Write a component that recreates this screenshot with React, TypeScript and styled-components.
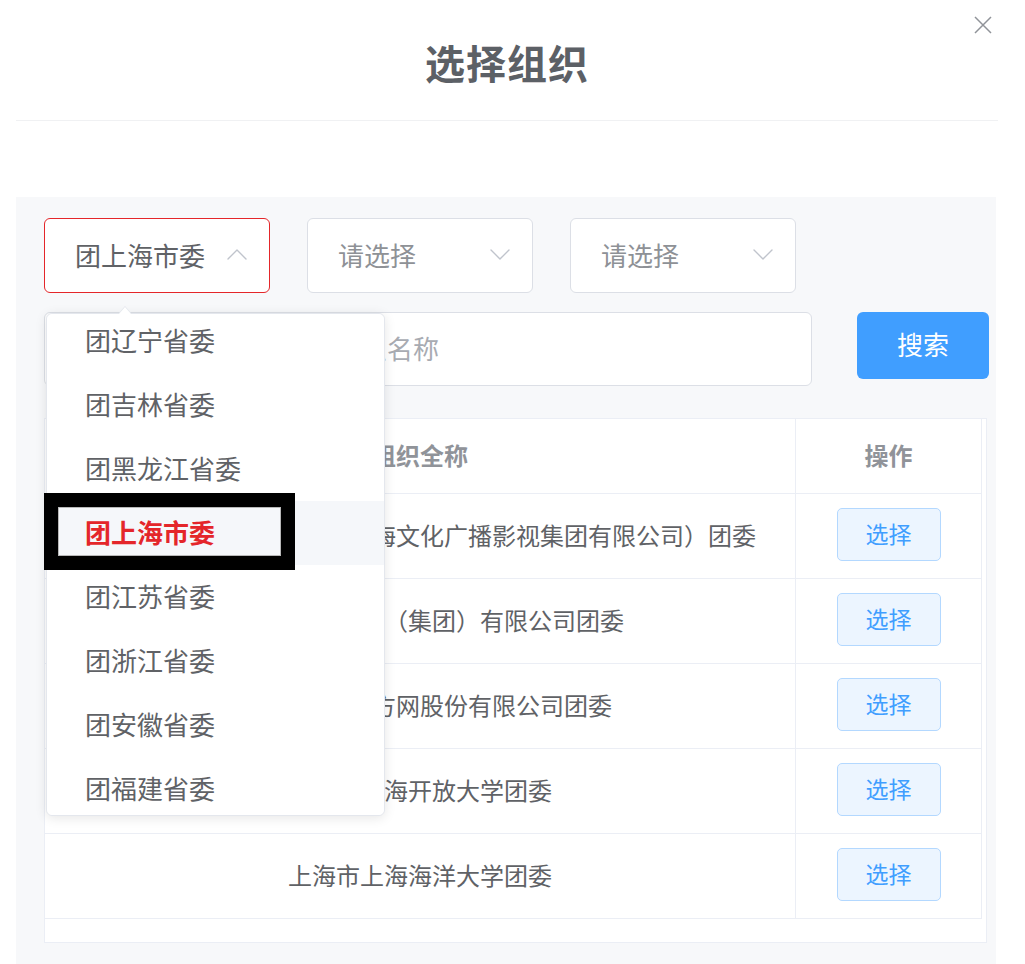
import styled, { createGlobalStyle } from 'styled-components'

const GlobalStyle = createGlobalStyle`
  html, body {
    margin: 0;
    padding: 0;
    background: #fff;
  }
  body {
    font-family: "Noto Sans CJK SC", "Noto Sans", sans-serif;
  }
  * {
    box-sizing: border-box;
  }
`

const provinces = [
  '团辽宁省委',
  '团吉林省委',
  '团黑龙江省委',
  '团上海市委',
  '团江苏省委',
  '团浙江省委',
  '团安徽省委',
  '团福建省委',
]

const orgs = [
  '上海市上海广播电视台（上海文化广播影视集团有限公司）团委',
  '上海市上海机场（集团）有限公司团委',
  '上海市上海东方网股份有限公司团委',
  '上海市上海开放大学团委',
  '上海市上海海洋大学团委',
]

function Chevron({ up }: { up?: boolean }) {
  return (
    <svg width="20" height="11" viewBox="0 0 20 11" fill="none">
      <polyline
        points={up ? '1,10 10,1 19,10' : '1,1 10,10 19,1'}
        stroke="#c0c4cc"
        strokeWidth="1.4"
        strokeLinecap="round"
        strokeLinejoin="round"
      />
    </svg>
  )
}

export default function App() {
  return (
    <>
      <GlobalStyle />
      <Dialog>
        <Header>
          <Title>选择组织</Title>
          <Close aria-label="close">
            <svg width="18" height="18" viewBox="0 0 18 18">
              <path d="M1 1L17 17M17 1L1 17" stroke="#909399" strokeWidth="1.5" />
            </svg>
          </Close>
        </Header>

        <Body>
          <Panel>
            <FilterRow>
              <SelectWrap>
                <Select $active>
                  <SelectValue>团上海市委</SelectValue>
                  <Chevron up />
                </Select>

                <Dropdown>
                  <Arrow />
                  <ScrollArea>
                    <OptionList>
                      {provinces.map((p) => (
                        <Option key={p} $active={p === '团上海市委'}>{p}</Option>
                      ))}
                    </OptionList>
                  </ScrollArea>
                  <Marker />
                </Dropdown>
              </SelectWrap>

              <Select>
                <SelectValue $placeholder>请选择</SelectValue>
                <Chevron />
              </Select>
              <Select>
                <SelectValue $placeholder>请选择</SelectValue>
                <Chevron />
              </Select>
            </FilterRow>

            <SearchRow>
              <SearchInput placeholder="请输入您需要查询的团组织名称" />
              <SearchButton>搜索</SearchButton>
            </SearchRow>

            <TableWrap>
              <Table>
                <Row $height={75}>
                  <HeadCell>组织全称</HeadCell>
                  <HeadCell>操作</HeadCell>
                </Row>
                {orgs.map((o) => (
                  <Row key={o} $height={85}>
                    <Cell>{o}</Cell>
                    <Cell>
                      <PickButton>选择</PickButton>
                    </Cell>
                  </Row>
                ))}
              </Table>
            </TableWrap>
          </Panel>
        </Body>
      </Dialog>
    </>
  )
}

const Dialog = styled.div`
  position: relative;
  width: 982px;
  margin-left: 16px;
`

const Header = styled.header`
  position: relative;
  height: 121px;
  padding-top: 4px;
  display: flex;
  align-items: center;
  justify-content: center;
  border-bottom: 1px solid #f0f1f3;
`

const Title = styled.h1`
  margin: 0;
  font-size: 40px;
  font-weight: 700;
  color: #5c6066;
  letter-spacing: 1px;
`

const Close = styled.button`
  position: absolute;
  top: 16px;
  right: 6px;
  width: 18px;
  height: 18px;
  padding: 0;
  border: none;
  background: none;
  display: flex;
`

const Body = styled.div`
  padding-top: 76px;
`

const Panel = styled.section`
  width: 980px;
  background: #f7f8fa;
  padding: 21px 7px 24px 28px;
`

const FilterRow = styled.div`
  display: flex;
  gap: 37px;
`

const SelectWrap = styled.div`
  position: relative;
`

const Select = styled.div<{ $active?: boolean }>`
  width: 226px;
  height: 75px;
  display: flex;
  align-items: center;
  justify-content: space-between;
  padding: 0 22px 3px 30px;
  background: #fff;
  border: ${({ $active }) => ($active ? '1.5px solid #e4262a' : '1px solid #dcdfe6')};
  border-radius: 6px;
`

const SelectValue = styled.span<{ $placeholder?: boolean }>`
  font-size: 26px;
  color: ${({ $placeholder }) => ($placeholder ? '#8e9196' : '#606266')};
`

const Dropdown = styled.div`
  position: absolute;
  top: 95px;
  left: 2px;
  z-index: 10;
  width: 339px;
  height: 503px;
  background: #fff;
  border: 1px solid #e4e7ed;
  border-radius: 6px;
  box-shadow: 0 2px 12px rgba(0, 0, 0, 0.1);
`

const Arrow = styled.div`
  position: absolute;
  top: -8px;
  left: 71px;
  width: 0;
  height: 0;
  border: 7px solid transparent;
  border-top: none;
  border-bottom: 8px solid #e4e7ed;

  &::after {
    content: '';
    position: absolute;
    top: 1px;
    left: -6px;
    border: 6px solid transparent;
    border-top: none;
    border-bottom: 7px solid #fff;
  }
`

const ScrollArea = styled.div`
  height: 100%;
  overflow: hidden;
  border-radius: 6px;
`

const OptionList = styled.ul`
  list-style: none;
  margin: -5px 0 0;
  padding: 0;
`

const Option = styled.li<{ $active?: boolean }>`
  height: 64px;
  display: flex;
  align-items: center;
  padding: 0 0 4px 38px;
  font-size: 26px;
  color: ${({ $active }) => ($active ? '#e4262a' : '#606266')};
  font-weight: ${({ $active }) => ($active ? 700 : 400)};
  background: ${({ $active }) => ($active ? '#f5f7fa' : '#fff')};
`

const Marker = styled.div`
  position: absolute;
  top: 179px;
  left: -3px;
  width: 251px;
  height: 77px;
  border: 14px solid #000;
  box-shadow: inset 0 0 0 1px #b8b8b8;
  pointer-events: none;
`

const SearchRow = styled.div`
  display: flex;
  align-items: flex-start;
  gap: 45px;
  margin-top: 19px;
`

const SearchInput = styled.input`
  width: 768px;
  height: 74px;
  padding: 0 30px 4px;
  border: 1px solid #dcdfe6;
  border-radius: 6px;
  background: #fff;
  font-family: inherit;
  font-size: 26px;
  color: #606266;
  outline: none;

  &::placeholder {
    color: #a8abb2;
  }
`

const SearchButton = styled.button`
  width: 132px;
  height: 67px;
  padding: 0 0 4px;
  border: none;
  border-radius: 6px;
  background: #409eff;
  color: #fff;
  font-family: inherit;
  font-size: 26px;
`

const TableWrap = styled.div`
  margin-top: 32px;
  width: 943px;
  height: 525px;
  background: #fff;
  border: 1px solid #ebeef5;
`

const Table = styled.div`
  width: 937px;
  border-right: 1px solid #ebeef5;
`

const Row = styled.div<{ $height: number }>`
  display: grid;
  grid-template-columns: 751px 185px;
  height: ${({ $height }) => $height}px;
  border-bottom: 1px solid #ebeef5;

  & > *:first-child {
    border-right: 1px solid #ebeef5;
  }
`

const HeadCell = styled.div`
  display: flex;
  align-items: center;
  justify-content: center;
  padding-bottom: 4px;
  font-size: 24px;
  font-weight: 700;
  color: #909399;
`

const Cell = styled.div`
  display: flex;
  align-items: center;
  justify-content: center;
  padding-bottom: 3px;
  font-size: 24px;
  color: #606266;
  white-space: nowrap;
`

const PickButton = styled.button`
  width: 104px;
  height: 53px;
  padding: 0 0 3px;
  border: 1px solid #b3d8ff;
  border-radius: 5px;
  background: #ecf5ff;
  color: #409eff;
  font-family: inherit;
  font-size: 23px;
`
